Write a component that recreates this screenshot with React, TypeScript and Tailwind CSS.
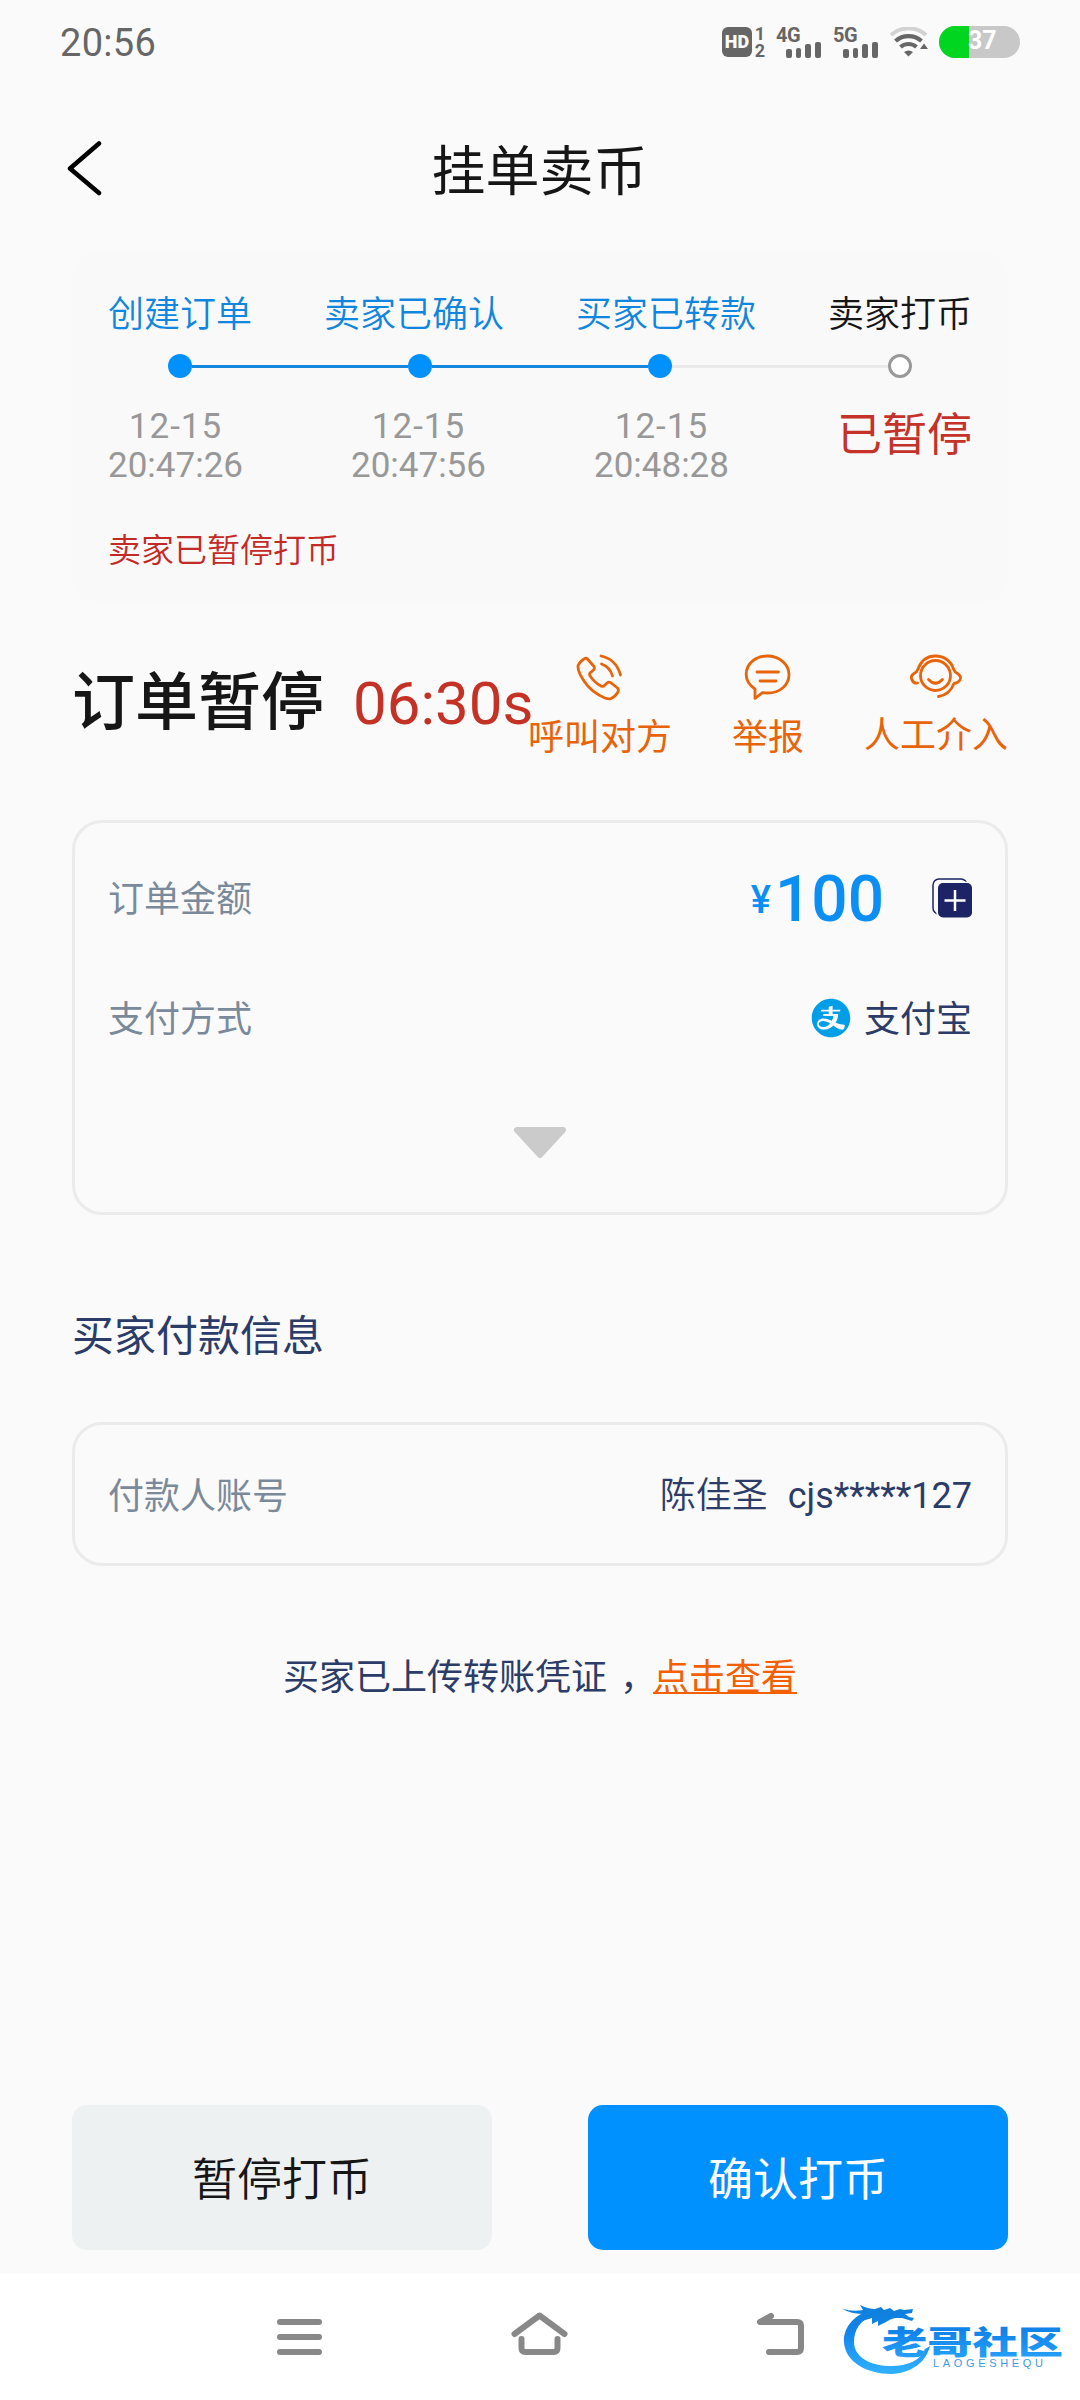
import type { ReactNode } from 'react';
import { AiFillAlipayCircle } from 'react-icons/ai';
import clsx from 'clsx';

const steps = [
  { label: '创建订单', done: true },
  { label: '卖家已确认', done: true },
  { label: '买家已转款', done: true },
  { label: '卖家打币', done: false },
];

const times = [
  { date: '12-15', time: '20:47:26' },
  { date: '12-15', time: '20:47:56' },
  { date: '12-15', time: '20:48:28' },
];

const Signal = ({ label }: { label: string }) => (
  <div className="relative h-[31px] w-[45px]">
    <span className="absolute left-0 top-0 font-[Roboto] text-[20px] leading-[16px] font-bold tracking-[-0.5px]">
      {label}
    </span>
    <div className="absolute right-0 bottom-0 flex items-end gap-[4px]">
      <i className="h-[9px] w-[6px] rounded-[2px] bg-[#666]" />
      <i className="h-[10px] w-[5px] rounded-[2px] bg-[#666]" />
      <i className="h-[14px] w-[6px] rounded-[2px] bg-[#666]" />
      <i className="h-[16px] w-[6px] rounded-[2px] bg-[#666]" />
    </div>
  </div>
);

const StatusBar = () => (
  <div className="flex h-[84px] items-center justify-between pr-[60px] pl-[60px] text-[#666]">
    <span className="pt-[2px] font-[Roboto] text-[38px] leading-[40px] tracking-[0.3px]">20:56</span>
    <div className="flex items-center">
      <div className="flex h-[30px] w-[30px] items-center justify-center rounded-[6px] bg-[#666] font-[Roboto] text-[18px] leading-none font-black text-[#fafafa]">
        HD
      </div>
      <div className="ml-[2px] flex w-[12px] flex-col items-center font-[Roboto] text-[18px] leading-[17px] font-bold">
        <span>1</span>
        <span>2</span>
      </div>
      <div className="ml-[10px]">
        <Signal label="4G" />
      </div>
      <div className="ml-[12px]">
        <Signal label="5G" />
      </div>
      <svg className="ml-[12px]" width="38" height="30" viewBox="0 0 38 30" fill="none">
        <path d="M1 8C11 -1 26 -1 36 8" stroke="#d2d2d2" strokeWidth="4" />
        <path d="M5.5 14C13 7.500 24 7.500 31.500 14" stroke="#666" strokeWidth="4.200" />
        <path d="M10.500 20C15 16 22 16 26.500 20" stroke="#666" strokeWidth="4.200" />
        <path d="M14 25Q18.500 22 23 25L18.500 29.500Z" fill="#666" />
        <path d="M30 22L34 16.500L38 22Z" fill="#666" />
      </svg>
      <div className="relative ml-[11px] h-[32px] w-[81px] overflow-hidden rounded-full bg-[#c8c8c8]">
        <div className="h-full w-[30px] bg-[#00d520]" />
        <span className="absolute top-[-1px] left-[29px] font-[Roboto] text-[25px] leading-[32px] font-bold text-white">
          37
        </span>
      </div>
    </div>
  </div>
);

const Header = () => (
  <header className="relative flex h-[168px] items-center justify-center">
    <svg
      className="absolute top-[56px] left-[66px]"
      width="38"
      height="56"
      viewBox="0 0 38 56"
      fill="none"
      stroke="#000"
      strokeWidth="4.500"
      strokeLinecap="round"
      strokeLinejoin="round"
    >
      <path d="M33 3.500L4 28.500L33 53" />
    </svg>
    <h1 className="-ml-[1px] text-[54px] leading-[60px] text-[#161616]">挂单卖币</h1>
  </header>
);

const Progress = () => (
  <section className="mx-[72px] h-[350px] rounded-[24px] bg-[#f9f9f9] px-[36px] pt-[37px]">
    <div className="flex justify-between text-[36px] leading-[44px] font-[350]">
      {steps.map((s) => (
        <span key={s.label} className={s.done ? 'text-[#1086de]' : 'text-[#161616]'}>
          {s.label}
        </span>
      ))}
    </div>
    <div className="mt-[21px] flex h-[24px] items-center px-[60px]">
      {steps.map((s, i) => (
        <div key={s.label} className={clsx('flex items-center', i > 0 && 'flex-1')}>
          {i > 0 && (
            <div className={clsx('h-[3px] flex-1', s.done ? 'bg-[#1488dc]' : 'bg-[#e9e9e9]')} />
          )}
          <div
            className={clsx(
              'size-[24px] rounded-full',
              s.done ? 'bg-[#0091ff]' : 'border-[3px] border-[#999] bg-white'
            )}
          />
        </div>
      ))}
    </div>
    <div className="mt-[29px] flex justify-between">
      {times.map((t) => (
        <div
          key={t.time}
          className="flex flex-col items-center font-[Roboto] text-[35px] leading-[39px] text-[#989898]"
        >
          <span className="tracking-[1px]">{t.date}</span>
          <span>{t.time}</span>
        </div>
      ))}
      <span className="text-[45px] leading-[50px] text-[#c43229]">已暂停</span>
    </div>
    <p className="mt-[43px] text-[33px] leading-[40px] font-[350] text-[#c42a25]">卖家已暂停打币</p>
  </section>
);

const iconProps = {
  fill: 'none',
  stroke: '#e8640a',
  strokeWidth: 2.8,
  strokeLinecap: 'round',
  strokeLinejoin: 'round',
} as const;

const PhoneIcon = () => (
  <svg width="45" height="45" viewBox="0 0 45 45" className="-ml-[1px] overflow-visible" {...iconProps}>
    <path d="M1 12C1 9 4 6 7 4Q9 2.500 10.500 4L17 11.500Q18 13 17 14.500L13 18Q12 19.500 13.500 21.500Q18 28 24 31Q26 32 27.500 30.500L30 28Q31.500 26.500 33.500 27.500L40.500 33Q42 34.500 41 37Q38 42 34 43.500Q32 44.500 28 43Q14 37 7 26Q1 17 1 12Z" />
    <path d="M24 1Q39 4 43.500 20" />
    <path d="M24.500 9Q33 12 35.500 21" />
  </svg>
);

const ReportIcon = () => (
  <svg width="45" height="45" viewBox="0 0 45 45" className="overflow-visible" {...iconProps}>
    <path d="M10 43.500V34C4 30 1 25 1.200 19C1.500 8 11 1 22.500 1S44 9 44 19.500S35 38 22.500 38Q20 38 17.500 37.600Z" />
    <path d="M12 17H33.500M15 26H31" />
  </svg>
);

const ServiceIcon = () => (
  <svg width="52" height="45" viewBox="0 0 52 45" className="overflow-visible" {...iconProps}>
    <circle cx="25.500" cy="20.500" r="15" />
    <path d="M7.500 28Q4 29 2 25Q0 21 4 18.500Q7 17 8 14C11 6 17 1 25.500 1S41 6 43.500 14Q44.500 17 47.500 18.500Q52 21.500 50 25Q48 28 44 28.500C41 36 36 40.500 28.500 41.500" />
    <path d="M18.500 24.500Q25.500 32 32.500 24.500" />
  </svg>
);

const Action = ({ icon, label, className }: { icon: ReactNode; label: string; className?: string }) => (
  <button className={clsx('flex flex-col items-center self-start text-[36px] leading-[44px] text-[#e8640a]', className)}>
    {icon}
    <span>{label}</span>
  </button>
);

const OrderState = () => (
  <section className="mx-[72px] mt-[53px] flex h-[165px] justify-between">
    <div className="flex pt-[8px] whitespace-nowrap">
      <h2 className="text-[63px] leading-[68px] font-medium text-[#161616]">订单暂停</h2>
      <span className="ml-[29px] pt-[7px] font-[Roboto] text-[60px] leading-[68px] text-[#c43225]">06:30s</span>
    </div>
    <div className="-ml-[10px] flex gap-[60px]">
      <Action icon={<PhoneIcon />} label="呼叫对方" className="gap-[12px]" />
      <Action icon={<ReportIcon />} label="举报" className="gap-[12px]" />
      <Action icon={<ServiceIcon />} label="人工介入" className="gap-[10px]" />
    </div>
  </section>
);

const Amount = () => (
  <section className="mx-[72px] flex h-[395px] flex-col rounded-[30px] border-[3px] border-[#ebebeb] px-[33px] text-[36px]">
    <div className="mt-[40px] flex h-[70px] items-center justify-between">
      <span className="-mt-[4px] text-[#7b8a9b]">订单金额</span>
      <div className="flex items-center">
        <div className="flex items-center pt-[4px] font-[Roboto] font-medium text-[#0b8ff5]">
          <span className="mr-[4px] text-[38px] leading-[60px]">¥</span>
          <span className="text-[64px] leading-[64px]">100</span>
        </div>
        <svg className="ml-[48px]" width="40" height="40" viewBox="0 0 40 40" fill="none">
          <rect x="1" y="1" width="34" height="35" rx="6" stroke="#1c2466" strokeWidth="1.500" />
          <rect x="4" y="3.500" width="36" height="36.500" rx="7" fill="#fafafa" />
          <rect x="6" y="5" width="34" height="34.500" rx="5" fill="#1c2466" />
          <path d="M23 12V33M12.500 22.500H33.500" stroke="#fff" strokeWidth="2.500" />
        </svg>
      </div>
    </div>
    <div className="mt-[50px] flex h-[70px] items-center justify-between">
      <span className="-mt-[4px] text-[#7b8a9b]">支付方式</span>
      <div className="flex items-center text-[#2c3c68]">
        <AiFillAlipayCircle className="-mt-[1px] size-[44px] text-[#009ee6]" />
        <span className="-mt-[4px] ml-[11px]">支付宝</span>
      </div>
    </div>
    <svg className="mt-[73px] self-center" width="54" height="33" viewBox="0 0 54 33">
      <path
        d="M4 4H50L27 29Z"
        fill="#cbcbcb"
        stroke="#cbcbcb"
        strokeWidth="6"
        strokeLinejoin="round"
      />
    </svg>
  </section>
);

const Payer = () => (
  <section className="mx-[72px] mt-[93px] text-[#2c3c68]">
    <h3 className="text-[42px] leading-[50px]">买家付款信息</h3>
    <div className="mt-[64px] flex h-[144px] items-center justify-between rounded-[30px] border-[3px] border-[#ebebeb] px-[33px] text-[36px]">
      <span className="-mt-[2px] text-[#7b8a9b]">付款人账号</span>
      <div className="flex items-baseline">
        <span className="font-[350]">陈佳圣</span>
        <span className="ml-[20px] font-[Roboto] text-[36px]">cjs*****127</span>
      </div>
    </div>
    <p className="mt-[83px] flex justify-center text-[36px] leading-[50px]">
      买家已上传转账凭证
      <span className="relative left-[13px]">，</span>
      <a className="ml-[10px] text-[#f26000] underline decoration-[2px] underline-offset-[2px]">点击查看</a>
    </p>
  </section>
);

const Watermark = () => (
  <svg className="absolute right-[10px] bottom-[20px]" width="230" height="80" viewBox="0 0 230 80">
    <defs>
      <linearGradient id="wm" x1="0" y1="0" x2="0" y2="80" gradientUnits="userSpaceOnUse">
        <stop offset="0.100" stopColor="#0f80dc" />
        <stop offset="0.400" stopColor="#1184ea" />
        <stop offset="0.900" stopColor="#2fb0ff" />
      </linearGradient>
    </defs>
    <g fill="url(#wm)">
      <path d="M31 10C12 15 3 30 4 42C5 62 27 74 51 74C72 73 86 62 90 46L85 49C81 60 68 66 51 66C32 66 14 58 14 42C14 30 20 20 33 16Z" />
      {/* dragon head */}
      <path d="M2 8.500Q12 12 23 10L20 5Q28 9 35 9L41 7L44 10L50 8L54 11L60 9L64 10L73 9L72 13L65 14L69 17L74 18L72 21L62 18L55 18Q50 19 46 22L38 26L38 21L32 24L32 18L22 21L26 14Q10 14 2 8.500Z" />
    </g>
    <text
      x="42"
      y="54"
      fontSize="32"
      fontWeight="900"
      fontFamily="'Noto Sans CJK SC', sans-serif"
      textLength="181"
      lengthAdjust="spacingAndGlyphs"
      fill="url(#wm)"
    >
      老哥社区
    </text>
    <text
      x="93"
      y="66.500"
      fontSize="11"
      fontFamily="'Liberation Sans', sans-serif"
      textLength="110"
      fill="#3a9be8"
    >
      LAOGESHEQU
    </text>
  </svg>
);

const NavBar = () => (
  <nav className="relative flex h-[127px] justify-center gap-[187px] bg-white pt-[38px]">
    <svg width="47" height="46" viewBox="0 0 47 46" stroke="#888" strokeWidth="6" strokeLinecap="round">
      <path d="M4 11H43M4 26H43M4 41H43" />
    </svg>
    <svg width="59" height="46" viewBox="0 0 59 46" fill="none" stroke="#888" strokeWidth="6" strokeLinecap="round" strokeLinejoin="round">
      <path d="M4.500 23L29.500 4.500L54.500 23" />
      <path d="M11.500 28V37Q11.500 41 15.500 41H43.500Q47.500 41 47.500 37V28" />
    </svg>
    <svg width="49" height="46" viewBox="0 0 49 46" fill="none" stroke="#888" strokeWidth="6" strokeLinecap="round" strokeLinejoin="round">
      <path d="M15 5L4 11H41Q45 11 45 15V37Q45 41 41 41H13" />
    </svg>
    <Watermark />
  </nav>
);

const App = () => {
  return (
    <div className="flex h-[2400px] w-[1080px] flex-col overflow-hidden bg-[#fafafa] font-['Noto_Sans_CJK_SC',sans-serif]">
      <StatusBar />
      <Header />
      <Progress />
      <OrderState />
      <Amount />
      <Payer />
      <div className="mx-[72px] mt-auto mb-[23px] flex justify-between text-[45px]">
        <button className="h-[145px] w-[420px] rounded-[15px] bg-[#edf1f2] pb-[2px] font-[350] text-[#161616]">
          暂停打币
        </button>
        <button className="h-[145px] w-[420px] rounded-[15px] bg-[#0091ff] pb-[2px] text-white">确认打币</button>
      </div>
      <NavBar />
    </div>
  );
};

export default App;
